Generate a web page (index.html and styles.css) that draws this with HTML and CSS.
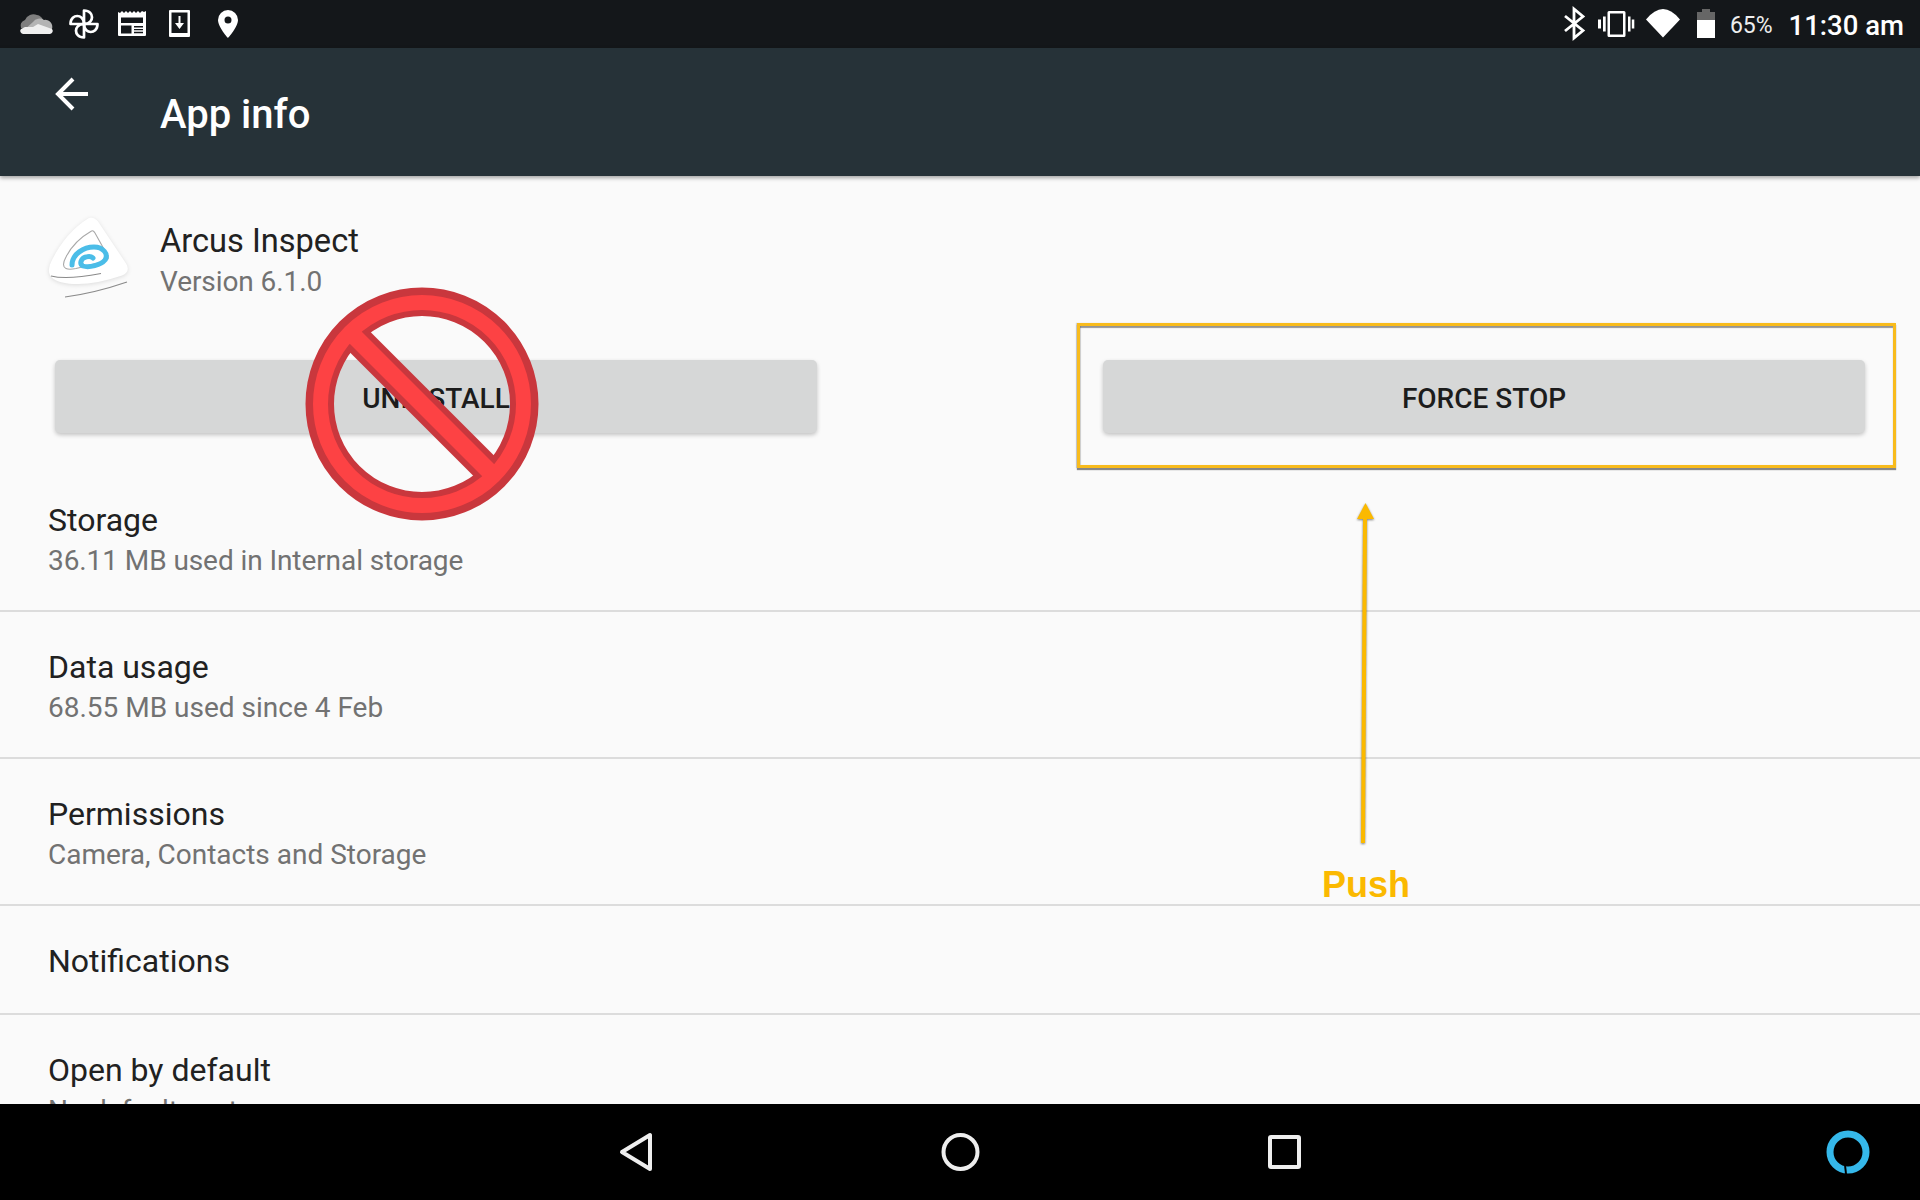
FILE: index.html
```html
<!DOCTYPE html>
<html lang="en">
<head>
<meta charset="utf-8">
<title>App info</title>
<link rel="stylesheet" href="styles.css">
</head>
<body>
<div class="screen">
  <header class="status-bar">
    <div class="status-left">
      <svg class="cell" viewBox="0 0 48 48"><path fill="#7f7f7f" d="M9 28a6 6 0 0 1 4-8 9 9 0 0 1 12-5 8 8 0 0 1 6 5l-8 5-8 3z"/><path fill="#b4b4b4" d="M12 30l9-8a8 8 0 0 1 11-2 7 7 0 0 1 8 9z"/><path fill="#efefef" d="M11 34a3 3 0 0 1-2-5l4-2h8l5-3 14 5a3 3 0 0 1-2 5z"/></svg>
      <svg class="cell" viewBox="0 0 48 48"><g class="pin-petals"><path d="M24 24V10.500c6 0 8 4 8 6.750s-2 6.750-8 6.750z"/><path transform="rotate(90 24 24)" d="M24 24V10.500c6 0 8 4 8 6.750s-2 6.750-8 6.750z"/><path transform="rotate(180 24 24)" d="M24 24V10.500c6 0 8 4 8 6.750s-2 6.750-8 6.750z"/><path transform="rotate(270 24 24)" d="M24 24V10.500c6 0 8 4 8 6.750s-2 6.750-8 6.750z"/></g></svg>
      <svg class="cell" viewBox="0 0 48 48"><path fill="#fff" d="M10 12l2 1 2-2 2 2 2-2 2 2 2-2 2 2 2-2 2 2 2-2 2 2 2-2 2 1 2-1v24a1 1 0 0 1-1 1H11a1 1 0 0 1-1-1z"/><path fill="#14171a" d="M13 17.500h22v5.500H13zM13 25.500h10.500v8H13zM26 26h9v1.500h-9zM26 29h9v1.200h-9zM26 31.800h9v1.500h-9z"/></svg>
      <svg class="cell" viewBox="0 0 48 48"><path fill="#fff" d="M14 10h19a1 1 0 0 1 1 1v25a1 1 0 0 1-1 1H14a1 1 0 0 1-1-1V11a1 1 0 0 1 1-1zm1.500 2.500V33h16V12.500z"/><path fill="#fff" d="M22.500 16h2v7h3.500l-4.500 6-4.500-6h3.500z"/></svg>
      <svg class="cell" viewBox="0 0 48 48"><path fill="#fff" fill-rule="evenodd" d="M24 10a10 10 0 0 0-10 10c0 7 10 18 10 18s10-11 10-18a10 10 0 0 0-10-10zm0 6.500a3.500 3.500 0 1 1 0 7 3.500 3.500 0 0 1 0-7z"/></svg>
    </div>
    <div class="status-right">
      <svg class="cell-sm" viewBox="0 0 44 48"><path class="line-white" d="M13 16l18 14.500-9 7.500V9l9 7.500L13 31"/></svg>
      <svg class="cell-sm" viewBox="0 0 44 48"><path fill="#fff" fill-rule="evenodd" d="M13 11h15a1.500 1.500 0 0 1 1.500 1.500v23a1.500 1.500 0 0 1-1.500 1.500H13a1.500 1.500 0 0 1-1.500-1.500v-23A1.500 1.500 0 0 1 13 11zm1 2.500v21h13v-21zM2 19.500h3v9H2zM7 16.500h2.700v15H7zM32 16.500h2.500v15H32zM35.800 19.500h2.500v9h-2.500z"/></svg>
      <svg class="cell-sm" viewBox="0 0 44 48"><path fill="#fff" d="M6 19.500Q23-1.500 40 19.500L23 37.500z"/></svg>
      <svg class="cell-sm" viewBox="0 0 44 48"><path fill="#666" d="M18 9h8v3h5v8H13v-8h5z"/><path fill="#fff" d="M13 20h18v18H13z"/></svg>
      <span class="battery-text">65%</span>
      <span class="clock">11:30 am</span>
    </div>
  </header>

  <div class="app-bar">
    <svg class="back-arrow" viewBox="0 0 48 48"><path class="line-back" d="M40 24H10M25 9L10 24l15 15"/></svg>
    <h1 class="app-bar-title">App info</h1>
  </div>

  <main class="content">
    <section class="app-head">
      <svg class="logo" viewBox="0 0 96 96">
        <path class="logo-body" d="M45 5q5-1.500 9 3.500l28 42q5 8-4 12-28 9.500-48 8.500-20-1-24-9-3-6 2-15Q22 19 45 5z"/>
        <path class="logo-line" d="M47.500 18Q30 28 22 44q-5 9 0 11.500 3 1.500 10 0l28-7q6-2 3.500-6L51 20q-2-3-3.500-2z"/>
        <path class="logo-swirl" d="M28 52C28 41 40 34 50 34c9 0 15 7 11 13-4 5-16 8-22 6-4-2-2-8 3-9 3-1 6 0 7 1"/>
        <path class="logo-tail" d="M7 63q16 4 50-2.500M21 84q30-4 62-15"/>
      </svg>
      <div class="app-text">
        <div class="row-title app-name">Arcus Inspect</div>
        <div class="row-sub tight">Version 6.1.0</div>
      </div>
    </section>

    <section class="button-row">
      <button class="action-btn" type="button">UNINSTALL</button>
      <button class="action-btn" type="button">FORCE STOP</button>
    </section>

    <section class="list">
      <div class="list-row">
        <div class="row-title">Storage</div>
        <div class="row-sub tight">36.11 MB used in Internal storage</div>
      </div>
      <div class="list-row">
        <div class="row-title">Data usage</div>
        <div class="row-sub">68.55 MB used since 4 Feb</div>
      </div>
      <div class="list-row">
        <div class="row-title">Permissions</div>
        <div class="row-sub">Camera, Contacts and Storage</div>
      </div>
      <div class="list-row list-row-single">
        <div class="row-title">Notifications</div>
      </div>
      <div class="list-row">
        <div class="row-title">Open by default</div>
        <div class="row-sub">No defaults set</div>
      </div>
    </section>
  </main>

  <nav class="nav-bar">
    <svg class="nav-icon" viewBox="0 0 48 48"><path class="line-nav" d="M38 7v34L10 24z"/></svg>
    <svg class="nav-icon" viewBox="0 0 48 48"><circle class="line-nav" cx="24.500" cy="24" r="17"/></svg>
    <svg class="nav-icon" viewBox="0 0 48 48"><rect class="line-nav" x="10" y="9" width="29" height="30" rx="1"/></svg>
    <svg class="alexa" viewBox="0 0 48 48"><circle class="alexa-ring" cx="24" cy="24" r="18"/><path class="alexa-cut" d="M21 37l1 9"/></svg>
  </nav>

  <svg class="no-sign" viewBox="0 0 240 240">
    <circle class="no-dark" cx="120" cy="120" r="102.250" />
    <path class="no-dark-bar" d="M48 48l144 144"/>
    <circle class="no-red" cx="120" cy="120" r="101.500"/>
    <path class="no-red-bar" d="M48 48l144 144"/>
  </svg>

  <div class="highlight-box"></div>

  <svg class="push-arrow" viewBox="0 0 24 346">
    <path class="push-shaft" d="M10 342L12 18"/>
    <path class="push-head" d="M12.500 2L21 18H4z"/>
  </svg>
  <div class="push-label">Push</div>
</div>
</body>
</html>
```

FILE: styles.css
```css
* { box-sizing: border-box; }
html, body { margin: 0; padding: 0; }
body { width: 1920px; height: 1200px; overflow: hidden; font-family: Roboto, "Liberation Sans", sans-serif; background: #fafafa; }
.screen { position: relative; width: 1920px; height: 1200px; display: flex; flex-direction: column; overflow: hidden; }

.status-bar { flex: 0 0 48px; height: 48px; background: #14171a; display: flex; justify-content: space-between; align-items: center; padding: 0 16px 0 12px; color: #fff; }
.status-left, .status-right { display: flex; align-items: center; }
.cell { width: 48px; height: 48px; display: block; }
.cell-sm { width: 44px; height: 48px; display: block; }
.pin-petals path { fill: none; stroke: #fff; stroke-width: 2.7; stroke-linejoin: round; }
.line-white { fill: none; stroke: #fff; stroke-width: 2.8; }
.battery-text { font-size: 23px; line-height: 44px; padding-top: 4px; margin-left: 2px; color: #eee; }
.clock { font-size: 27.5px; line-height: 44px; padding-top: 4px; font-weight: 500; margin-left: 16px; }

.app-bar { position: relative; z-index: 2; flex: 0 0 128px; background: #263238; display: flex; box-shadow: 0 2px 4px rgba(0,0,0,.35); }
.back-arrow { width: 48px; height: 48px; margin: 22px 0 0 48px; display: block; }
.line-back { fill: none; stroke: #fff; stroke-width: 4; }
.app-bar-title { margin: 0 0 0 64px; padding-top: 6px; font-size: 40px; font-weight: 500; line-height: 122px; color: #fff; }

.content { flex: 1 1 auto; min-height: 0; overflow: hidden; background: #fafafa; }
.app-head { display: flex; align-items: center; height: 125px; padding: 45px 0 0 44px; }
.logo { width: 96px; height: 96px; margin-right: 20px; flex: none; display: block; }
.logo-body { fill: #fff; filter: drop-shadow(0 1px 2px rgba(0,0,0,.12)); }
.logo-line { fill: none; stroke: #a8a8a8; stroke-width: 1.1; }
.logo-swirl { fill: none; stroke: #4bbde8; stroke-width: 5; stroke-linecap: round; }
.logo-tail { fill: none; stroke: #8a8a8a; stroke-width: 1.1; }
.row-title { font-size: 32px; line-height: 40px; color: #212121; }
.app-name { font-size: 32.6px; }
.row-sub { font-size: 28px; line-height: 41px; color: #727272; white-space: nowrap; }
.tight { letter-spacing: -.08px; }

.button-row { display: grid; grid-template-columns: 762px 762px; column-gap: 286px; padding: 59px 0 0 55px; }
.action-btn { height: 73px; border: 0; border-radius: 5px; background: #d6d7d7; color: #1c1c1c; font: 500 28px Roboto, sans-serif; padding: 3px 0 0; box-shadow: 0 2px 4px rgba(0,0,0,.22); }

.list { margin-top: 32px; }
.list-row { height: 147px; padding: 35px 48px 0; border-bottom: 2px solid #dcdcdc; }
.list-row-single { height: 109px; }

.nav-bar { position: relative; z-index: 3; flex: 0 0 96px; background: #000; display: grid; grid-template-columns: 324px 324px 324px 1fr; padding-left: 474px; align-items: center; }
.nav-icon { width: 48px; height: 48px; justify-self: center; display: block; }
.line-nav { fill: none; stroke: #eee; stroke-width: 4; stroke-linejoin: round; }
.alexa { width: 48px; height: 48px; justify-self: end; margin-right: 48px; display: block; }
.alexa-ring { fill: none; stroke: #35b8ea; stroke-width: 7; }
.alexa-cut { stroke: #000; stroke-width: 2; fill: none; }

.no-sign { position: absolute; left: 302px; top: 284px; width: 240px; height: 240px; z-index: 4; }
.no-dark { fill: none; stroke: #c9373d; stroke-width: 28.5; }
.no-dark-bar { stroke: #c9373d; stroke-width: 29; fill: none; }
.no-red { fill: none; stroke: #fd4244; stroke-width: 15; }
.no-red-bar { stroke: #fd4244; stroke-width: 17; fill: none; }

.highlight-box { position: absolute; left: 1077px; top: 323px; width: 819px; height: 145px; border: 3px solid #f8bb1c; box-shadow: 0 2px 1px rgba(0,0,0,.45), inset 0 2px 1px rgba(0,0,0,.4), inset 1px 0 1px rgba(0,0,0,.15), -1px 0 1px rgba(0,0,0,.15); z-index: 4; }

.push-arrow { position: absolute; left: 1353px; top: 501px; width: 24px; height: 346px; z-index: 4; filter: drop-shadow(0 1px 1px rgba(0,0,0,.5)); }
.push-shaft { fill: none; stroke: #fbb900; stroke-width: 4; }
.push-head { fill: #fbb900; }
.push-label { position: absolute; left: 1322px; top: 865px; z-index: 4; font: 700 36px/40px "Liberation Sans", Arial, sans-serif; color: #fbb900; }
```
